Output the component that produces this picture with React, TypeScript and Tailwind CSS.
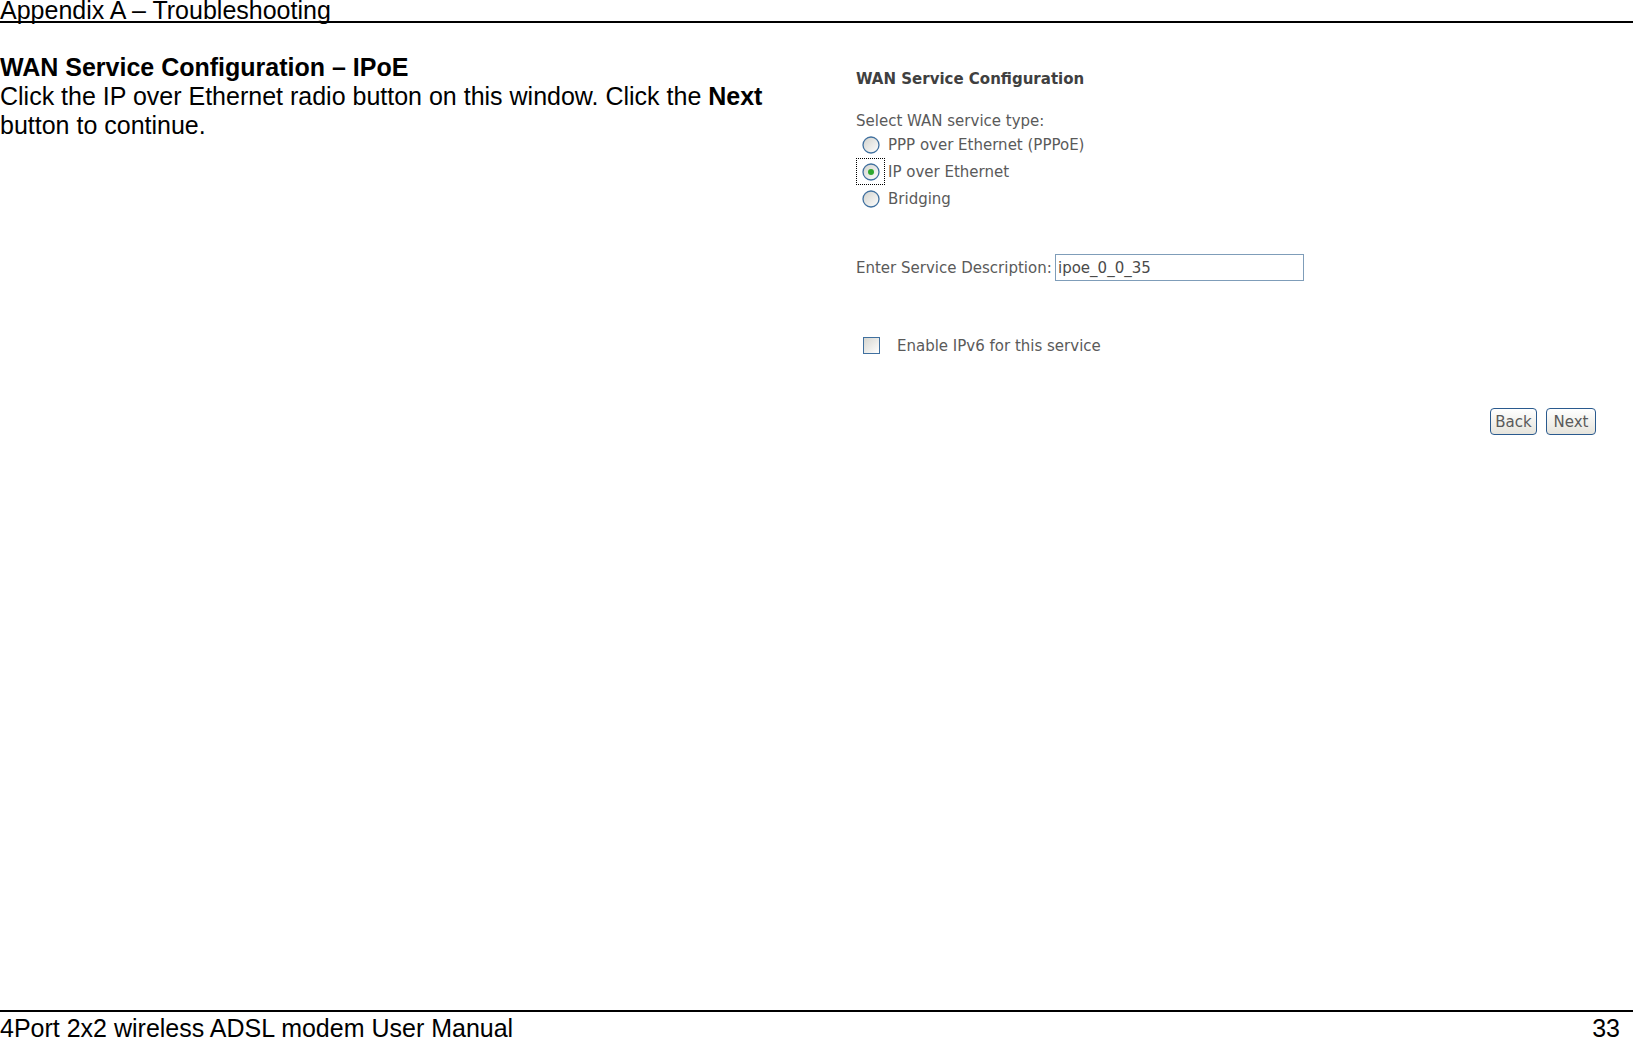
import React from "react";

const uiFont = { fontFamily: '"DejaVu Sans", Verdana, sans-serif' };

function Radio({ checked }: { checked?: boolean }) {
  const id = checked ? "rg1" : "rg0";
  return (
    <svg width="18" height="18" viewBox="0 0 18 18">
      <defs>
        <linearGradient id={id} x1="0" y1="0" x2="1" y2="1">
          <stop offset="0" stopColor="#d2d2cc" />
          <stop offset="1" stopColor="#ffffff" />
        </linearGradient>
      </defs>
      <circle cx="9" cy="9" r="8" fill={`url(#${id})`} stroke="#40709f" strokeWidth="1.3" />
      {checked && <circle cx="9" cy="9" r="3" fill="#2fa82f" />}
    </svg>
  );
}

export default function App() {
  return (
    <div
      className="w-[1633px] h-[1038px] bg-white text-black flex flex-col overflow-hidden"
      style={{ fontFamily: '"Liberation Sans", Arial, sans-serif' }}
    >
      <div className="border-b-2 border-black pb-[1px]">
        <div className="text-[25px] leading-[20px]">Appendix A – Troubleshooting</div>
      </div>

      <div className="flex-1 flex flex-row">
        <div className="w-[790px] pt-[30px] text-[25px] leading-[29px]">
          <div className="font-bold">WAN Service Configuration – IPoE</div>
          <div>
            Click the IP over Ethernet radio button on this window. Click the <span className="font-bold">Next</span> button to
            continue.
          </div>
        </div>

        <div className="ml-[66px] w-[740px] pt-[46px] text-[15px] text-[#5a5a5a]" style={uiFont}>
          <div className="font-bold leading-[20px] text-[#404040]">WAN Service Configuration</div>
          <div className="mt-[22px] leading-[20px]">Select WAN service type:</div>
          <div className="flex flex-col">
            <div className="flex items-center h-[27px]">
              <div className="w-[29px] h-[27px] flex items-center justify-center border border-transparent">
                <Radio />
              </div>
              <span className="ml-[3px] leading-[20px]">PPP over Ethernet (PPPoE)</span>
            </div>
            <div className="flex items-center h-[27px]">
              <div className="w-[29px] h-[27px] flex items-center justify-center border border-dotted border-black">
                <Radio checked />
              </div>
              <span className="ml-[3px] leading-[20px]">IP over Ethernet</span>
            </div>
            <div className="flex items-center h-[27px]">
              <div className="w-[29px] h-[27px] flex items-center justify-center border border-transparent">
                <Radio />
              </div>
              <span className="ml-[3px] leading-[20px]">Bridging</span>
            </div>
          </div>

          <div className="mt-[42px] flex items-center h-[27px]">
            <span className="w-[199px] leading-[20px] whitespace-nowrap">Enter Service Description:</span>
            <div className="w-[249px] h-[27px] border border-[#7f9db9] flex items-center pl-[2px] text-[#4a4a4a] leading-[20px]">
              ipoe_0_0_35
            </div>
          </div>

          <div className="mt-[51px] flex items-center h-[27px]">
            <div className="ml-[7px] w-[17px] h-[17px] border border-[#40709f] bg-gradient-to-br from-[#d6d6d0] to-white" />
            <span className="ml-[17px] leading-[20px]">Enable IPv6 for this service</span>
          </div>

          <div className="mt-[49px] flex justify-end gap-[9px]">
            <div className="w-[47px] h-[27px] rounded-[4px] border border-[#2a5a8e] bg-gradient-to-b from-white to-[#e6e4dc] flex items-center justify-center leading-[20px] text-[#5a5a5a]">
              Back
            </div>
            <div className="w-[50px] h-[27px] rounded-[4px] border border-[#2a5a8e] bg-gradient-to-b from-white to-[#e6e4dc] flex items-center justify-center leading-[20px] text-[#5a5a5a]">
              Next
            </div>
          </div>
        </div>
      </div>

      <div className="border-t-2 border-black h-[28px] flex flex-row justify-between pr-[13px] pt-[6px] text-[25px] leading-[20px]">
        <span>4Port 2x2 wireless ADSL modem User Manual</span>
        <span>33</span>
      </div>
    </div>
  );
}
